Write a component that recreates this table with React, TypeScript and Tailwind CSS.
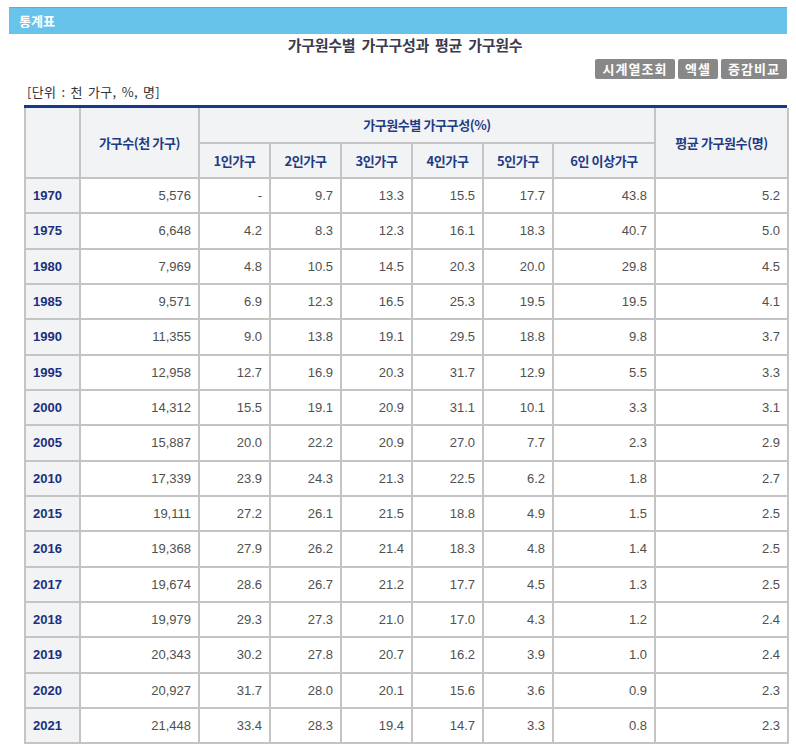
import React from "react";

const rows: [string, string, string, string, string, string, string, string, string][] = [
  ["1970", "5,576", "-", "9.7", "13.3", "15.5", "17.7", "43.8", "5.2"],
  ["1975", "6,648", "4.2", "8.3", "12.3", "16.1", "18.3", "40.7", "5.0"],
  ["1980", "7,969", "4.8", "10.5", "14.5", "20.3", "20.0", "29.8", "4.5"],
  ["1985", "9,571", "6.9", "12.3", "16.5", "25.3", "19.5", "19.5", "4.1"],
  ["1990", "11,355", "9.0", "13.8", "19.1", "29.5", "18.8", "9.8", "3.7"],
  ["1995", "12,958", "12.7", "16.9", "20.3", "31.7", "12.9", "5.5", "3.3"],
  ["2000", "14,312", "15.5", "19.1", "20.9", "31.1", "10.1", "3.3", "3.1"],
  ["2005", "15,887", "20.0", "22.2", "20.9", "27.0", "7.7", "2.3", "2.9"],
  ["2010", "17,339", "23.9", "24.3", "21.3", "22.5", "6.2", "1.8", "2.7"],
  ["2015", "19,111", "27.2", "26.1", "21.5", "18.8", "4.9", "1.5", "2.5"],
  ["2016", "19,368", "27.9", "26.2", "21.4", "18.3", "4.8", "1.4", "2.5"],
  ["2017", "19,674", "28.6", "26.7", "21.2", "17.7", "4.5", "1.3", "2.5"],
  ["2018", "19,979", "29.3", "27.3", "21.0", "17.0", "4.3", "1.2", "2.4"],
  ["2019", "20,343", "30.2", "27.8", "20.7", "16.2", "3.9", "1.0", "2.4"],
  ["2020", "20,927", "31.7", "28.0", "20.1", "15.6", "3.6", "0.9", "2.3"],
  ["2021", "21,448", "33.4", "28.3", "19.4", "14.7", "3.3", "0.8", "2.3"],
];

const sizes = ["1인가구", "2인가구", "3인가구", "4인가구", "5인가구", "6인 이상가구"];

export default function App() {
  return (
    <div className="w-[796px] h-[750px] overflow-hidden bg-white pt-[7px] font-['Noto_Sans_CJK_KR',sans-serif]">
      {/* title bar */}
      <div className="mx-[9px] h-[27px] bg-[#67c3ea] border-t border-[#9a9a9a] pl-[10px] flex items-center text-white font-bold text-[13px]">
        통계표
      </div>

      <h2 className="mt-[1px] pl-[14px] h-[20px] leading-[20px] text-center text-[15px] font-bold text-[#3d3a4c] tracking-[-0.3px] [word-spacing:3px]">
        가구원수별 가구구성과 평균 가구원수
      </h2>

      {/* buttons */}
      <div className="mt-[4px] pr-[9px] flex justify-end gap-[3px]">
        <button className="h-[20px] w-[80px] rounded-[2px] bg-[#888888] text-white text-[13px] font-bold leading-[20px] tracking-[1px]">
          시계열조회
        </button>
        <button className="h-[20px] w-[40px] rounded-[2px] bg-[#888888] text-white text-[13px] font-bold leading-[20px] tracking-[1px]">
          엑셀
        </button>
        <button className="h-[20px] w-[66px] rounded-[2px] bg-[#888888] text-white text-[13px] font-bold leading-[20px] tracking-[1px]">
          증감비교
        </button>
      </div>

      <p className="mt-[4px] pl-[27px] h-[18px] leading-[18px] text-[13px] text-[#333] tracking-[0.3px] [word-spacing:2px]">
        [단위 : 천 가구, %, 명]
      </p>

      {/* table */}
      <div className="mt-[4px] ml-[24px] w-[763px] h-[3px] bg-[#17398c]" />
      <table className="ml-[24px] w-[763px] table-fixed border-collapse">
        <colgroup>
          <col className="w-[55px]" />
          <col className="w-[119px]" />
          <col className="w-[71px]" />
          <col className="w-[71px]" />
          <col className="w-[71px]" />
          <col className="w-[71px]" />
          <col className="w-[70px]" />
          <col className="w-[102px]" />
          <col className="w-[133px]" />
        </colgroup>
        <thead>
          <tr className="h-[35px]">
            <th rowSpan={2} className="border-2 border-t-0 border-[#c4c4c4] bg-[#f2f3f5]" />
            <th
              rowSpan={2}
              className="border-2 border-t-0 border-[#c4c4c4] bg-[#f2f3f5] text-[13px] font-bold text-[#1f3b86] tracking-[-0.4px]"
            >
              가구수(천 가구)
            </th>
            <th
              colSpan={6}
              className="border-2 border-t-0 border-[#c4c4c4] bg-[#f2f3f5] text-[13px] font-bold text-[#1f3b86] tracking-[-0.4px]"
            >
              가구원수별 가구구성(%)
            </th>
            <th
              rowSpan={2}
              className="border-2 border-t-0 border-[#c4c4c4] bg-[#f2f3f5] text-[13px] font-bold text-[#1f3b86] tracking-[-0.4px]"
            >
              평균 가구원수(명)
            </th>
          </tr>
          <tr className="h-[35px]">
            {sizes.map((s) => (
              <th
                key={s}
                className="border-2 border-[#c4c4c4] bg-[#f2f3f5] text-[13px] font-bold text-[#1f3b86] tracking-[-0.4px]"
              >
                {s}
              </th>
            ))}
          </tr>
        </thead>
        <tbody>
          {rows.map((r) => (
            <tr key={r[0]} className="h-[35.33px]">
              <td className="border-2 border-[#c4c4c4] bg-[#f2f3f5] pl-[7px] font-['Liberation_Sans',sans-serif] text-[13px] font-bold text-[#1a3080]">
                {r[0]}
              </td>
              {r.slice(1).map((v, i) => (
                <td
                  key={i}
                  className="border-2 border-[#c4c4c4] pr-[7px] text-right font-['Liberation_Sans',sans-serif] text-[13px] text-[#505050]"
                >
                  {v}
                </td>
              ))}
            </tr>
          ))}
        </tbody>
      </table>
    </div>
  );
}
